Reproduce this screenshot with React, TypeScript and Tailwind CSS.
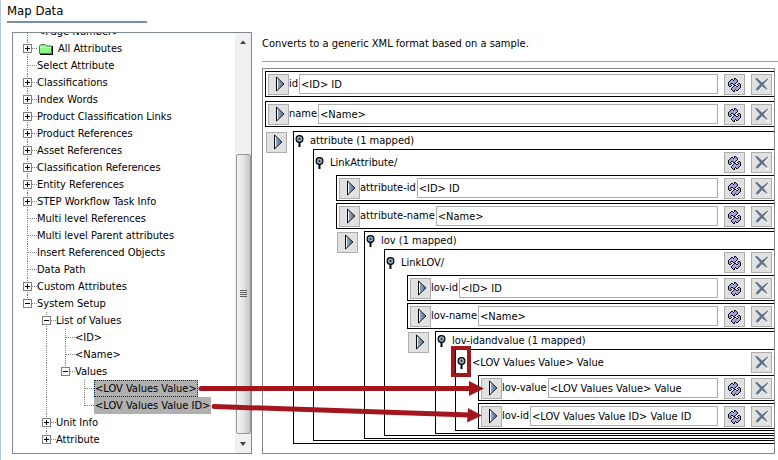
import type { ReactNode } from "react";

interface TreeNode {
  label: string;
  level: number;
  state?: "open" | "closed";
  last?: boolean;
  folder?: boolean;
  selected?: boolean;
  focused?: boolean;
  guides?: boolean[];
}

const nodes: TreeNode[] = [
  { label: "<Page Number>", level: 0 },
  { label: "All Attributes", level: 0, state: "closed", folder: true },
  { label: "Select Attribute", level: 0 },
  { label: "Classifications", level: 0, state: "closed" },
  { label: "Index Words", level: 0, state: "closed" },
  { label: "Product Classification Links", level: 0, state: "closed" },
  { label: "Product References", level: 0, state: "closed" },
  { label: "Asset References", level: 0, state: "closed" },
  { label: "Classification References", level: 0, state: "closed" },
  { label: "Entity References", level: 0, state: "closed" },
  { label: "STEP Workflow Task Info", level: 0, state: "closed" },
  { label: "Multi level References", level: 0 },
  { label: "Multi level Parent attributes", level: 0 },
  { label: "Insert Referenced Objects", level: 0 },
  { label: "Data Path", level: 0 },
  { label: "Custom Attributes", level: 0, state: "closed" },
  { label: "System Setup", level: 0, state: "open", last: true },
  { label: "List of Values", level: 1, state: "open", guides: [false] },
  { label: "<ID>", level: 2, guides: [false, true] },
  { label: "<Name>", level: 2, guides: [false, true] },
  { label: "Values", level: 2, state: "open", last: true, guides: [false, true] },
  {
    label: "<LOV Values Value>",
    level: 3,
    selected: true,
    focused: true,
    guides: [false, true, false],
  },
  {
    label: "<LOV Values Value ID>",
    level: 3,
    selected: true,
    last: true,
    guides: [false, true, false],
  },
  { label: "Unit Info", level: 1, state: "closed", guides: [false] },
  { label: "Attribute", level: 1, state: "closed", last: true, guides: [false] },
];

// K = outline, P = fill
const refreshPixels = [
  "......KK.....",
  "...KK.KPK....",
  "..KPPKPPPK...",
  ".KPPPPPPPK...",
  "KPPPPPPPK....",
  "KPPKKPPK..KK.",
  "KPK..KK..KPPK",
  "KPPK..KK..KPK",
  ".KK..KPPKKPPK",
  "....KPPPPPPPK",
  "...KPPPPPPPK.",
  "...KPPPKPPK..",
  "....KPK.KK...",
  ".....KK......",
];

function Connector({ state, last }: Pick<TreeNode, "state" | "last">) {
  return (
    <svg width="14" height="17" className="shrink-0" shapeRendering="crispEdges" aria-hidden="true">
      <path
        d={last ? "M4.5 0V9" : "M4.5 0V17"}
        stroke="#808080"
        strokeDasharray="1 1"
      />
      <path d="M5 8.5H14" stroke="#808080" strokeDasharray="1 1" />
      {state && (
        <>
          <rect x="0.5" y="4.5" width="8" height="8" fill="#fff" stroke="#808080" />
          <path d="M2 8.5H7" stroke="#000" />
          {state === "closed" && <path d="M4.5 6V11" stroke="#000" />}
        </>
      )}
    </svg>
  );
}

function FolderIcon() {
  return (
    <svg width="15" height="12" className="mr-1 ml-0.5 shrink-0" aria-hidden="true">
      <path d="M0.5 10.5V3L2 1.5H6L7.5 3H12.5V10.5Z" fill="#8df58d" stroke="#3f7f4a" />
      <path d="M1 4.5H12" stroke="#d6ffd6" />
      <path d="M1 11.5H14M13.5 3V11" stroke="#000" />
    </svg>
  );
}

function TreeRow({ node }: { node: TreeNode }) {
  return (
    <li className="flex h-[17px] items-center whitespace-nowrap">
      {node.guides?.map((line, i) => (
        <svg key={i} width="19" height="17" className="shrink-0" shapeRendering="crispEdges" aria-hidden="true">
          {line && <path d="M4.5 0V17" stroke="#808080" strokeDasharray="1 1" />}
        </svg>
      ))}
      <Connector state={node.state} last={node.last} />
      {node.folder && <FolderIcon />}
      <span
        className={
          node.focused
            ? "h-full border border-dotted border-[#10243e] bg-[#b0b0b0] leading-[15px]"
            : node.selected
              ? "h-full bg-[#b0b0b0] px-px leading-[17px]"
              : "leading-[17px]"
        }
      >
        {node.label}
      </span>
    </li>
  );
}

function Scrollbar() {
  return (
    <div className="flex w-4 shrink-0 flex-col items-center bg-[#f0f0f0]" aria-hidden="true">
      <svg width="16" height="17">
        <path d="M5 11L8 7.5L11 11Z" fill="#404040" />
      </svg>
      <div className="h-[104px]" />
      <div className="flex w-[15px] flex-1 items-center justify-center rounded-xs border border-[#979797] bg-linear-to-r from-[#f5f5f5] via-[#e4e4e6] to-[#c4c5c9]">
        <svg width="7" height="9" shapeRendering="crispEdges">
          <path d="M0 0.5H7M0 2.5H7M0 4.5H7M0 6.5H7" stroke="#606060" />
        </svg>
      </div>
      <svg width="16" height="19">
        <path d="M5 8H11L8 12Z" fill="#404040" />
      </svg>
    </div>
  );
}

function IconButton({ label, children }: { label: string; children: ReactNode }) {
  return (
    <button
      type="button"
      aria-label={label}
      className="flex size-[21px] shrink-0 items-center justify-center border border-[#adadad] bg-[#e1e1e1]"
    >
      {children}
    </button>
  );
}

function MapButton() {
  return (
    <IconButton label="Map">
      <svg width="19" height="19">
        <defs>
          <linearGradient id="play" x1="0" x2="1">
            <stop offset="0" stopColor="#9fb4c9" />
            <stop offset="1" stopColor="#4f6c8c" />
          </linearGradient>
        </defs>
        <path d="M7.5 2V16L15 9Z" fill="url(#play)" />
        <path d="M7.5 2L15 9L7.5 16" fill="none" stroke="#1c2630" />
        <path d="M7.5 2V16" stroke="#000" />
        <path d="M8.5 4V14" stroke="#fff" />
      </svg>
    </IconButton>
  );
}

function RefreshButton() {
  return (
    <IconButton label="Replace">
      <svg width="13" height="14" shapeRendering="crispEdges">
        {refreshPixels.map((row, y) =>
          [...row].map(
            (pixel, x) =>
              pixel !== "." && (
                <rect
                  key={`${x}-${y}`}
                  x={x}
                  y={y}
                  width="1"
                  height="1"
                  fill={pixel === "K" ? "#101018" : "#a3a3de"}
                />
              )
          )
        )}
      </svg>
    </IconButton>
  );
}

function DeleteButton() {
  return (
    <IconButton label="Remove">
      <svg width="19" height="19" fill="none">
        <path d="M5 5L16.5 16.5M16.5 4.5L6 15.5" stroke="#fff" strokeWidth="1.5" />
        <path d="M3 3.5L5 3L11 8.5L15.5 14.5L15 15L9 10.5Z" fill="#5f7488" />
        <path d="M15.5 3.5L16 4.5L11.5 9.5L6 15.5L4 15L4.5 13L9.5 8Z" fill="#5f7488" />
      </svg>
    </IconButton>
  );
}

function Pin() {
  return (
    <svg width="9" height="12" className="shrink-0" aria-hidden="true">
      <path d="M4.5 7V12" stroke="#000" strokeWidth="2" />
      <circle cx="4.5" cy="4" r="3.4" fill="#8ea6bf" stroke="#000" strokeWidth="1.2" />
      <circle cx="4.5" cy="4" r="1" fill="#1c2c3c" />
    </svg>
  );
}

function Field({ id, label, value }: { id: string; label: string; value: string }) {
  return (
    <div className="flex border-y border-l border-black pt-0.5 pr-0.5 pb-px pl-0.5">
      <MapButton />
      <label htmlFor={id} className="mr-px leading-5 whitespace-nowrap">
        {label}
      </label>
      <input
        id={id}
        defaultValue={value}
        className="mr-1.5 h-5 min-w-0 flex-1 border border-[#adadad] bg-white px-px outline-none"
      />
      <div className="flex gap-1.5">
        <RefreshButton />
        <DeleteButton />
      </div>
    </div>
  );
}

// Repeating element: map button on the left, nested records on the right
function Group({ label, children }: { label: string; children: ReactNode }) {
  return (
    <div className="flex gap-1.5">
      <div className="pt-px pl-px">
        <MapButton />
      </div>
      <div className="min-w-0 flex-1 border-y border-l border-black pb-0.5">
        <div className="flex h-[17px] items-center gap-1.5 pl-px">
          <Pin />
          <span>{label}</span>
        </div>
        <div className="pl-[19px]">{children}</div>
      </div>
    </div>
  );
}

interface RecordBoxProps {
  label: string;
  actions: ReactNode;
  children: ReactNode;
}

function RecordBox({ label, actions, children }: RecordBoxProps) {
  return (
    <div className="border-y border-l border-black pb-px">
      <div className="flex h-[25px] items-center gap-1.5 pr-0.5 pl-px">
        <Pin />
        <span className="flex-1">{label}</span>
        {actions}
      </div>
      <div className="flex flex-col gap-0.5 pl-[22px]">{children}</div>
    </div>
  );
}

function Annotations() {
  return (
    <svg
      width="490"
      height="430"
      className="pointer-events-none absolute top-0 left-0"
      aria-hidden="true"
    >
      <g fill="none" stroke="#a3161e" strokeWidth="5" strokeLinecap="round">
        <path d="M200 388.5H471" />
        <path d="M213 406.5L469 415" />
        <rect x="452" y="348" width="16" height="27" strokeWidth="4" strokeLinecap="butt" />
      </g>
      <path d="M468 381L483 388.5L468 396Z" fill="#a3161e" />
      <path d="M467 408L481 415.5L466 422.5Z" fill="#a3161e" />
    </svg>
  );
}

export default function App() {
  return (
    <div className="relative min-h-screen overflow-hidden border-l border-[#b4c8ec] bg-white pr-[3px] pb-[5px] pl-1.5 font-['DejaVu_Sans_Condensed','DejaVu_Sans',sans-serif] text-[11px] leading-4 text-black">
      <h1 className="w-[140px] border-b-2 border-[#7590ab] text-[13px] leading-[21px]">Map Data</h1>

      <main className="flex gap-2.5 pt-[9px] pl-[5px]">
        <section className="flex w-60 shrink-0 overflow-hidden border border-[#828790]">
          <ul className="-mt-2.5 min-w-0 flex-1 pl-2.5">
            {nodes.map((node) => (
              <TreeRow key={node.label} node={node} />
            ))}
          </ul>
          <Scrollbar />
        </section>

        <section className="min-w-0 flex-1">
          <p className="pt-1 pb-[9px]">Converts to a generic XML format based on a sample.</p>
          <hr className="-mr-[3px] border-[#a0a0a0]" />
          <div className="mt-1.5 flex flex-col gap-1 border border-[#828790] pt-0.5 pb-[9px] pl-0.5">
            <Field id="id" label="id" value="<ID> ID" />
            <Field id="name" label="name" value="<Name>" />
            <Group label="attribute (1 mapped)">
              <RecordBox
                label="LinkAttribute/"
                actions={
                  <>
                    <RefreshButton />
                    <DeleteButton />
                  </>
                }
              >
                <Field id="attribute-id" label="attribute-id" value="<ID> ID" />
                <Field id="attribute-name" label="attribute-name" value="<Name>" />
                <Group label="lov (1 mapped)">
                  <RecordBox
                    label="LinkLOV/"
                    actions={
                      <>
                        <RefreshButton />
                        <DeleteButton />
                      </>
                    }
                  >
                    <Field id="link-lov-id" label="lov-id" value="<ID> ID" />
                    <Field id="lov-name" label="lov-name" value="<Name>" />
                    <Group label="lov-idandvalue (1 mapped)">
                      <RecordBox label="<LOV Values Value> Value" actions={<DeleteButton />}>
                        <Field id="lov-value" label="lov-value" value="<LOV Values Value> Value" />
                        <Field id="value-lov-id" label="lov-id" value="<LOV Values Value ID> Value ID" />
                      </RecordBox>
                    </Group>
                  </RecordBox>
                </Group>
              </RecordBox>
            </Group>
          </div>
        </section>
      </main>

      <Annotations />
    </div>
  );
}
